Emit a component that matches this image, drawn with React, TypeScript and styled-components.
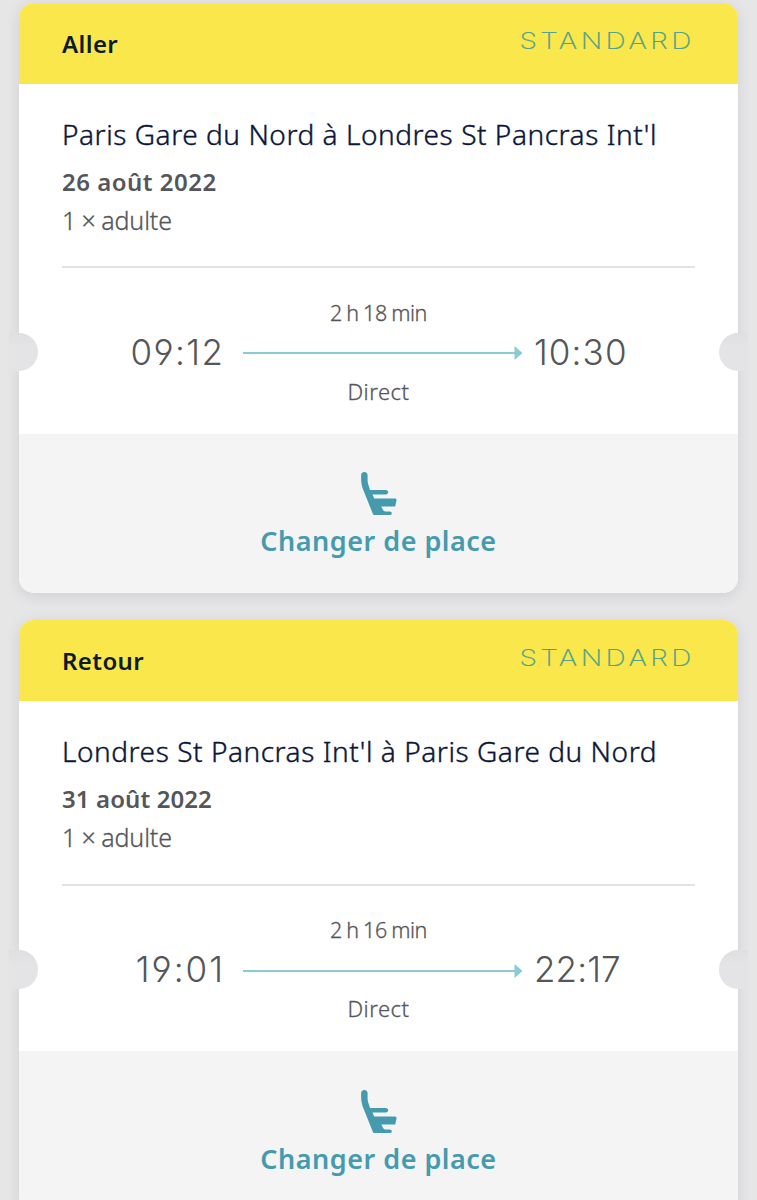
import React from "react";
import styled, { createGlobalStyle } from "styled-components";

const GlobalStyle = createGlobalStyle`
  * { box-sizing: border-box; }
  body { margin: 0; background: #e6e6e7; }
`;

const Page = styled.main`
  height: 1200px;
  overflow: hidden;
  padding: 2.5px 19px 0 19px;
  display: flex;
  flex-direction: column;
  gap: 27px;
  font-family: "Noto Sans", "Open Sans", sans-serif;
  color: #55565a;
`;

const Card = styled.article`
  position: relative;
  flex: none;
  height: 590.5px;
  border-radius: 15px;
  background: #fff;
  box-shadow: 0 3px 14px rgba(60, 60, 90, 0.13);
  display: flex;
  flex-direction: column;
`;

const Header = styled.header`
  height: 81px;
  padding: 0 46px 0 43px;
  border-radius: 15px 15px 0 0;
  background: #fae74b;
  display: flex;
  justify-content: space-between;
`;

const Direction = styled.h2`
  margin: 24px 0 0;
  font-size: 24px;
  line-height: 34px;
  font-weight: 600;
  letter-spacing: 0.4px;
  color: #0c1b2e;
`;

const FareClass = styled.span`
  margin-top: 21px;
  font-family: Inter, sans-serif;
  font-weight: 200;
  font-size: 23px;
  line-height: 34px;
  letter-spacing: 2.8px;
  margin-right: -2.5px;
  transform: scaleX(1.22);
  transform-origin: right;
  -webkit-text-stroke: 0.2px;
  color: #4fa28c;
`;

const Body = styled.section`
  height: 350px;
  padding: 31px 43px 0;
`;

const Route = styled.h3`
  margin: 0;
  font-size: 28px;
  line-height: 38px;
  font-weight: 300;
  -webkit-text-stroke: 0.4px;
  letter-spacing: 0.55px;
  white-space: nowrap;
  color: #0a1638;
`;

const TravelDate = styled.p<{ $spacing: number }>`
  margin: 12px 0 0;
  font-size: 24px;
  line-height: 34px;
  font-weight: 600;
  letter-spacing: ${(p) => p.$spacing}px;
`;

const Passengers = styled.p`
  margin: 4px 0 0;
  font-size: 25px;
  line-height: 34px;
  font-weight: 300;
  -webkit-text-stroke: 0.3px;
  letter-spacing: -0.1px;
  word-spacing: -1px;
`;

const Divider = styled.hr`
  margin: 29.5px 0 0;
  border: 0;
  height: 2px;
  background: #e3e3e5;
`;

const Journey = styled.div`
  margin-top: 29.5px;
  display: grid;
  grid-template-columns: 161px 280px 1fr;
  column-gap: 20px;
  align-items: center;
`;

const Time = styled.time<{ $end?: boolean; $spacing: number }>`
  font-family: Inter, sans-serif;
  font-weight: 300;
  font-size: 35px;
  line-height: 44px;
  font-feature-settings: "cv03", "cv04";
  letter-spacing: ${(p) => p.$spacing}px;
  text-align: ${(p) => (p.$end ? "left" : "right")};
  margin-left: ${(p) => (p.$end ? "-9px" : "0")};
  margin-right: ${(p) => (p.$end ? 0 : -p.$spacing)}px;
`;

const Track = styled.div`
  display: flex;
  flex-direction: column;
  align-items: center;
`;

const TrackLabel = styled.span<{ $stop?: boolean }>`
  font-size: ${(p) => (p.$stop ? 22 : 21.5)}px;
  line-height: 30px;
  font-weight: 300;
  -webkit-text-stroke: 0.3px;
  margin-top: ${(p) => (p.$stop ? 15.5 : 0)}px;
  margin-left: -9px;
  letter-spacing: ${(p) => (p.$stop ? 0.5 : -0.4)}px;
  word-spacing: ${(p) => (p.$stop ? 0 : -0.8)}px;
`;

const ArrowSvg = styled.svg`
  display: block;
  margin-top: 18.5px;
`;

const Notch = styled.span<{ $side: "left" | "right" }>`
  position: absolute;
  top: 330px;
  ${(p) => p.$side}: -10px;
  width: 29px;
  height: 38.5px;
  background: linear-gradient(#dfdfe2, #e4e4e6 35%);
  border-radius: ${(p) => (p.$side === "left" ? "0 19px 19px 0" : "19px 0 0 19px")};
`;

const Footer = styled.button`
  flex: 1;
  border: 0;
  padding: 38.5px 0 0;
  border-radius: 0 0 15px 15px;
  background: #f4f4f4;
  color: #459bad;
  display: flex;
  flex-direction: column;
  align-items: center;
  gap: 7px;
  font-family: inherit;
  font-size: 27px;
  line-height: 38px;
  font-weight: 600;
  letter-spacing: 0.5px;
`;

const Arrow = () => (
  <ArrowSvg width="280" height="14" viewBox="0 0 280 14">
    <path d="M0 7H273" stroke="#89ccd5" strokeWidth="2" />
    <path d="M271.5 0L279.5 7L271.5 14Z" fill="#89ccd5" />
  </ArrowSvg>
);

const Seat = () => (
  <svg width="36" height="43" viewBox="0 0 36 43" fill="#459bad">
    <path d="M3.3 0C5.4 0 6.6 1.4 6.6 3.3C6.6 9.5 6.5 10 7.5 13.3L9 18H24.8C26 18 27.2 19 27.2 20.2C27.2 21.4 26 22.4 24.8 22.4H11.5L13.2 26.5H33.8C35.2 26.5 35.8 27.3 35.5 28.6L34.2 34.6H20.3C21.5 36.4 21.8 39.4 24.3 39.4H28.8C30 39.4 30.8 40.2 30.8 41.2C30.8 42.2 30 43 28.8 43H13.2C12.6 43 12.3 42.8 12 42.2L2 17.2C0.5 13 0.1 10.4 0.1 3.5C0.1 1.4 1.3 0 3.3 0Z" />
  </svg>
);

type Stop = { time: string; spacing: number };

type Trip = {
  direction: string;
  route: string;
  date: string;
  dateSpacing: number;
  departure: Stop;
  arrival: Stop;
  duration: string;
};

const trips: Trip[] = [
  {
    direction: "Aller",
    route: "Paris Gare du Nord à Londres St Pancras Int'l",
    date: "26 août 2022",
    dateSpacing: 0.5,
    departure: { time: "09:12", spacing: 1.4 },
    arrival: { time: "10:30", spacing: 1.1 },
    duration: "2 h 18 min",
  },
  {
    direction: "Retour",
    route: "Londres St Pancras Int'l à Paris Gare du Nord",
    date: "31 août 2022",
    dateSpacing: 0.1,
    departure: { time: "19:01", spacing: 2 },
    arrival: { time: "22:17", spacing: 0.1 },
    duration: "2 h 16 min",
  },
];

const Ticket = ({ trip }: { trip: Trip }) => (
  <Card>
    <Header>
      <Direction>{trip.direction}</Direction>
      <FareClass>STANDARD</FareClass>
    </Header>
    <Body>
      <Route>{trip.route}</Route>
      <TravelDate $spacing={trip.dateSpacing}>{trip.date}</TravelDate>
      <Passengers>1 × adulte</Passengers>
      <Divider />
      <Journey>
        <Time $spacing={trip.departure.spacing}>{trip.departure.time}</Time>
        <Track>
          <TrackLabel>{trip.duration}</TrackLabel>
          <Arrow />
          <TrackLabel $stop>Direct</TrackLabel>
        </Track>
        <Time $end $spacing={trip.arrival.spacing}>
          {trip.arrival.time}
        </Time>
      </Journey>
    </Body>
    <Footer>
      <Seat />
      <span>Changer de place</span>
    </Footer>
    <Notch $side="left" />
    <Notch $side="right" />
  </Card>
);

export default function App() {
  return (
    <>
      <GlobalStyle />
      <Page>
        {trips.map((trip) => (
          <Ticket key={trip.direction} trip={trip} />
        ))}
      </Page>
    </>
  );
}
